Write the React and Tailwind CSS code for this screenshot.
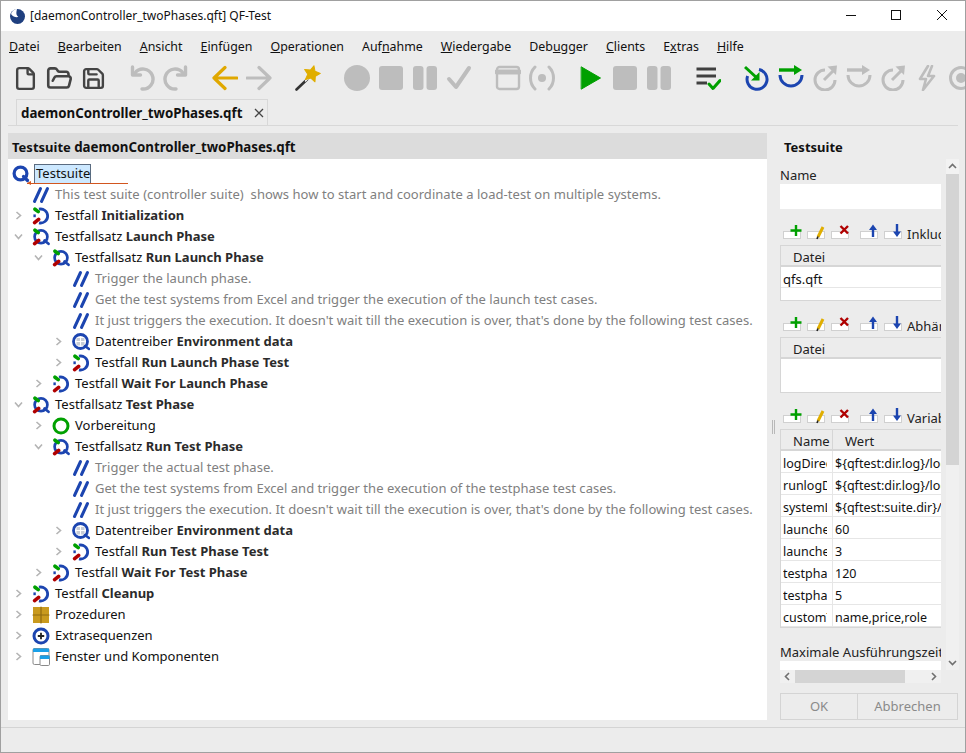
import React from 'react';
import { File, FolderOpen, Save } from 'lucide-react';

const BLUE = '#1c45b0', GREEN = '#00a000', RED = '#b00000', GOLD = '#e0a800', GR = '#bdbdbd', DK = '#444444';

const Svg = ({ children, s = 26 }) => (
  <svg width={s} height={s} viewBox="0 0 26 26" fill="none" strokeLinecap="round" strokeLinejoin="round">{children}</svg>
);
const Btn = ({ children }) => <div className="flex h-[26px] w-[34px] shrink-0 items-center justify-center">{children}</div>;
const Group = ({ children }) => <div className="flex shrink-0 items-center">{children}</div>;

const Undo = () => (
  <Svg>
    <path d="M6 8 A10 10 0 1 1 13 24" stroke={GR} strokeWidth="3.4" />
    <path d="M3.5 2 V10 H11.5" stroke={GR} strokeWidth="3.4" />
  </Svg>
);
const Redo = () => (
  <Svg>
    <path d="M20 8 A10 10 0 1 0 13 24" stroke={GR} strokeWidth="3.4" />
    <path d="M22.5 2 V10 H14.5" stroke={GR} strokeWidth="3.4" />
  </Svg>
);
const Back = ({ c }) => <Svg><path d="M2 13 H25 M13 2.5 L2 13 L13 23.5" stroke={c} strokeWidth="3.2" /></Svg>;
const Fwd = ({ c }) => <Svg><path d="M24 13 H1 M13 2.5 L24 13 L13 23.5" stroke={c} strokeWidth="3.2" /></Svg>;
const Wand = () => (
  <Svg>
    <path d="M1.5 24.5 L12 14.5" stroke="#333" strokeWidth="2.6" />
    <path d="M10.5 16 L13 13.5" stroke="#fff" strokeWidth="1.4" />
    <polygon
      points="17,0.5 19.4,5.6 25.1,6.4 20.9,10.3 21.9,15.9 17,13.2 12.1,15.9 13.1,10.3 8.9,6.4 14.6,5.6"
      fill="#e0ae00" stroke="#e0ae00" strokeWidth="1"
      transform="rotate(14 17 8.5)"
    />
  </Svg>
);
const GCircle = () => <Svg><circle cx="13" cy="13" r="13" fill={GR} /></Svg>;
const GSquare = () => <Svg><rect x="1" y="1" width="24" height="24" rx="3" fill={GR} /></Svg>;
const GPause = () => <Svg><rect x="1" y="1" width="10.5" height="24" rx="3" fill={GR} /><rect x="14.5" y="1" width="10.5" height="24" rx="3" fill={GR} /></Svg>;
const GCheck = () => <Svg><path d="M3 14 L10 22 L23 3" stroke={GR} strokeWidth="4" /></Svg>;
const GWin = () => <Svg><rect x="2" y="2" width="22" height="22" rx="2.5" stroke={GR} strokeWidth="2.4" /><path d="M2 7 H24" stroke={GR} strokeWidth="5" /></Svg>;
const GSignal = () => (
  <Svg>
    <circle cx="13" cy="13" r="4" fill={GR} />
    <path d="M6 2 C0 8 0 18 6 24" stroke={GR} strokeWidth="3" />
    <path d="M20 2 C26 8 26 18 20 24" stroke={GR} strokeWidth="3" />
  </Svg>
);
const Play = () => <Svg><path d="M3.5 2 L22.5 13 L3.5 24 Z" fill={GREEN} stroke={GREEN} strokeWidth="1" /></Svg>;
const ListCheck = () => (
  <Svg>
    <path d="M1.5 4 H21 M1.5 11 H21 M1.5 18 H12" stroke="#404040" strokeWidth="3.2" strokeLinecap="butt" />
    <path d="M14 19 L18 23.5 L25 15.5" stroke={GREEN} strokeWidth="3" />
  </Svg>
);
const StepIn = ({ ring = BLUE, arrow = GREEN }) => (
  <Svg>
    <path d="M15 4.5 A10 10 0 1 1 3.6 11" stroke={ring} strokeWidth="3" strokeLinecap="butt" />
    <path d="M1 2 L13 13" stroke={arrow} strokeWidth="3" strokeLinecap="butt" />
    <path d="M15.5 7 L15.5 15.5 L7 15.5 Z" fill={arrow} />
  </Svg>
);
const StepOver = ({ ring = BLUE, arrow = GREEN }) => (
  <Svg>
    <path d="M2 10 A10.5 10.5 0 1 0 24 10" stroke={ring} strokeWidth="3" strokeLinecap="butt" />
    <path d="M1 5 H17" stroke={arrow} strokeWidth="3.4" strokeLinecap="butt" />
    <path d="M16 0 L24 5 L16 10 Z" fill={arrow} />
  </Svg>
);
const StepOut = () => (
  <Svg>
    <path d="M13 5 A10 10 0 1 0 23 15" stroke={GR} strokeWidth="3" strokeLinecap="butt" />
    <path d="M12 15 L21 6" stroke={GR} strokeWidth="3" strokeLinecap="butt" />
    <path d="M15.5 1.5 L25 0.5 L24 10 Z" fill={GR} />
  </Svg>
);
const Bolt = () => <Svg><path d="M14 1 L6 14 H12 L9 25 L20 11 H14 L18 1" stroke={GR} strokeWidth="2.6" /></Svg>;
const Target = () => <Svg><circle cx="13" cy="13" r="10.5" stroke={GR} strokeWidth="3" /><circle cx="13" cy="13" r="5" fill={GR} /></Svg>;

const Toolbar = () => (
  <div className="flex h-[38px] items-start gap-[15px] overflow-hidden pl-[7px] pt-[3px]">
    <Group>
      <Btn><File size={25} color={DK} strokeWidth={2.3} /></Btn>
      <Btn><FolderOpen size={27} color={DK} strokeWidth={2.3} /></Btn>
      <Btn><Save size={25} color={DK} strokeWidth={2.3} /></Btn>
    </Group>
    <Group><Btn><Undo /></Btn><Btn><Redo /></Btn></Group>
    <Group><Btn><Back c={GOLD} /></Btn><Btn><Fwd c={GR} /></Btn></Group>
    <Group><Btn><Wand /></Btn></Group>
    <Group>
      <Btn><GCircle /></Btn><Btn><GSquare /></Btn><Btn><GPause /></Btn><Btn><GCheck /></Btn>
    </Group>
    <Group><Btn><GWin /></Btn><Btn><GSignal /></Btn></Group>
    <Group><Btn><Play /></Btn><Btn><GSquare /></Btn><Btn><GPause /></Btn></Group>
    <Group><Btn><ListCheck /></Btn></Group>
    <Group>
      <Btn><StepIn /></Btn><Btn><StepOver /></Btn><Btn><StepOut /></Btn>
      <Btn><StepOver ring={GR} arrow={GR} /></Btn><Btn><StepOut /></Btn><Btn><Bolt /></Btn><Btn><Target /></Btn>
    </Group>
  </div>
);

const I = ({ children }) => (
  <svg width="18" height="18" viewBox="0 0 18 18" fill="none" strokeLinecap="round" strokeLinejoin="round">{children}</svg>
);
const Marks = () => (
  <>
    <path d="M3 2.2 L6.2 4.6" stroke={GREEN} strokeWidth="3.6" />
    <path d="M2.6 15.6 L6.6 12.4" stroke={RED} strokeWidth="3.6" />
  </>
);
const icons = {
  suite: () => (
    <I><circle cx="8.5" cy="8.5" r="6.4" stroke={BLUE} strokeWidth="3.2" /><path d="M11.5 11.5 L15.5 15.5" stroke={BLUE} strokeWidth="3.2" /></I>
  ),
  comment: () => (
    <I><path d="M8.5 2.5 L2.5 15.5 M15.5 2.5 L9.5 15.5" stroke={BLUE} strokeWidth="3" /></I>
  ),
  test: () => (
    <I>
      <path d="M7 2.2 A7 7 0 1 1 7 15.8" stroke={BLUE} strokeWidth="2.8" strokeLinecap="butt" />
      <path d="M2.6 7.4 V10.2" stroke={BLUE} strokeWidth="2.4" strokeLinecap="butt" />
      <Marks />
    </I>
  ),
  set: () => (
    <I>
      <circle cx="9" cy="8.8" r="6.4" stroke={BLUE} strokeWidth="2.7" />
      <path d="M12.5 12.5 L16.5 15.8" stroke={BLUE} strokeWidth="2.7" />
      <Marks />
    </I>
  ),
  data: () => (
    <I>
      <circle cx="8.5" cy="8.5" r="7" stroke={BLUE} strokeWidth="2.8" />
      <rect x="4.5" y="5" width="8" height="7.5" fill="#c8cdd6" />
      <path d="M8.5 5 V12.5 M4.5 8.5 H12.5" stroke="#fff" strokeWidth="1" />
      <path d="M13 13 L17 16" stroke={BLUE} strokeWidth="2.6" />
    </I>
  ),
  setup: () => <I><circle cx="9" cy="9" r="7" stroke={GREEN} strokeWidth="3" /></I>,
  proc: () => (
    <I><rect x="1" y="1" width="16" height="16" fill="#c99a1e" /><path d="M9 1 V17 M1 9 H17" stroke="#8f6a10" strokeWidth="1.2" /></I>
  ),
  extra: () => (
    <I><circle cx="9" cy="9" r="7" stroke={BLUE} strokeWidth="3" /><path d="M9 5.8 V12.2 M5.8 9 H12.2" stroke="#222" strokeWidth="1.8" strokeLinecap="butt" /></I>
  ),
  win: () => (
    <I>
      <rect x="1" y="0.5" width="16" height="16" rx="1.5" fill="#fff" stroke="#8a8a8a" strokeWidth="1" />
      <path d="M1 0.5 H17 V4 H1 Z" fill="#1aa0e8" />
      <rect x="8" y="7.5" width="9.5" height="10" rx="1.2" fill="#fff" stroke="#8a8a8a" strokeWidth="1" />
      <path d="M8 7.5 H17.5 V11 H8 Z" fill="#1aa0e8" />
    </I>
  ),
};

const Chev = ({ dir }) => (
  <div className="flex w-[12px] shrink-0 items-center justify-center">
    {dir && (
      <svg width="9" height="9" viewBox="0 0 9 9" fill="none">
        <path d={dir === 'r' ? 'M2.5 1 L6.5 4.5 L2.5 8' : 'M1 2.5 L4.5 6.5 L8 2.5'} stroke="#b4b4b4" strokeWidth="1.6" />
      </svg>
    )}
  </div>
);

const indent = ['pl-[4px]', 'pl-[24px]', 'pl-[44px]'];

const Row = ({ d, c, icon, pre, bold, comment }) => {
  const Ic = icons[icon];
  return (
    <div className={`flex h-[21px] items-center whitespace-nowrap ${indent[d]}`}>
      <Chev dir={c} />
      <div className="ml-[8px] mr-[5px] flex w-[18px] shrink-0 justify-center"><Ic /></div>
      {comment ? (
        <span className="whitespace-pre tracking-[0.035px] text-[#808080]">{pre}</span>
      ) : (
        <span className="text-[#111]">{pre}{bold && <b className="font-bold text-[#2b2b2b]"> {bold}</b>}</span>
      )}
    </div>
  );
};

const rows = [
  { d: 0, icon: 'comment', pre: 'This test suite (controller suite)  shows how to start and coordinate a load-test on multiple systems.', comment: true },
  { d: 0, c: 'r', icon: 'test', pre: 'Testfall', bold: 'Initialization' },
  { d: 0, c: 'd', icon: 'set', pre: 'Testfallsatz', bold: 'Launch Phase' },
  { d: 1, c: 'd', icon: 'set', pre: 'Testfallsatz', bold: 'Run Launch Phase' },
  { d: 2, icon: 'comment', pre: 'Trigger the launch phase.', comment: true },
  { d: 2, icon: 'comment', pre: 'Get the test systems from Excel and trigger the execution of the launch test cases.', comment: true },
  { d: 2, icon: 'comment', pre: "It just triggers the execution. It doesn't wait till the execution is over, that's done by the following test cases.", comment: true },
  { d: 2, c: 'r', icon: 'data', pre: 'Datentreiber', bold: 'Environment data' },
  { d: 2, c: 'r', icon: 'test', pre: 'Testfall', bold: 'Run Launch Phase Test' },
  { d: 1, c: 'r', icon: 'test', pre: 'Testfall', bold: 'Wait For Launch Phase' },
  { d: 0, c: 'd', icon: 'set', pre: 'Testfallsatz', bold: 'Test Phase' },
  { d: 1, c: 'r', icon: 'setup', pre: 'Vorbereitung' },
  { d: 1, c: 'd', icon: 'set', pre: 'Testfallsatz', bold: 'Run Test Phase' },
  { d: 2, icon: 'comment', pre: 'Trigger the actual test phase.', comment: true },
  { d: 2, icon: 'comment', pre: 'Get the test systems from Excel and trigger the execution of the testphase test cases.', comment: true },
  { d: 2, icon: 'comment', pre: "It just triggers the execution. It doesn't wait till the execution is over, that's done by the following test cases.", comment: true },
  { d: 2, c: 'r', icon: 'data', pre: 'Datentreiber', bold: 'Environment data' },
  { d: 2, c: 'r', icon: 'test', pre: 'Testfall', bold: 'Run Test Phase Test' },
  { d: 1, c: 'r', icon: 'test', pre: 'Testfall', bold: 'Wait For Test Phase' },
  { d: 0, c: 'r', icon: 'test', pre: 'Testfall', bold: 'Cleanup' },
  { d: 0, c: 'r', icon: 'proc', pre: 'Prozeduren' },
  { d: 0, c: 'r', icon: 'extra', pre: 'Extrasequenzen' },
  { d: 0, c: 'r', icon: 'win', pre: 'Fenster und Komponenten' },
];

const Mn = ({ a, u, b }) => <span>{a}<span className="underline">{u}</span>{b}</span>;

const Box = ({ children }) => (
  <svg width="20" height="18" viewBox="0 0 20 18" fill="none">
    <rect x="0.5" y="7.5" width="17" height="7" fill="#fff" stroke="#d0d0d0" strokeWidth="1" />
    {children}
  </svg>
);
const MiniBar = ({ label }) => (
  <div className="flex h-[18px] items-center whitespace-nowrap pl-[3px]">
    <div className="flex gap-[4px]">
      <Box><path d="M13 1 V12 M7.5 6.5 H18.5" stroke={GREEN} strokeWidth="2.4" /></Box>
      <Box><path d="M11 13 L16 3" stroke="#e0ae00" strokeWidth="3" /><path d="M10 15 L11 12.5" stroke="#222" strokeWidth="1.6" /></Box>
      <Box><path d="M9.5 2 L17 9.5 M17 2 L9.5 9.5" stroke={RED} strokeWidth="2.4" /></Box>
      <div className="w-[1px]" />
      <Box><path d="M13 13 V4" stroke={BLUE} strokeWidth="2.4" /><path d="M9 6 L13 0.5 L17 6 Z" fill={BLUE} /></Box>
      <Box><path d="M13 0 V8" stroke={BLUE} strokeWidth="2.4" /><path d="M9 7.5 L13 13 L17 7.5 Z" fill={BLUE} /></Box>
    </div>
    <span className="ml-[3px] pt-[4px] text-[#222]">{label}</span>
  </div>
);

const FileTable = ({ body }) => (
  <div className="w-[200px] border border-[#d6d6d6]">
    <div className="h-[21px] border-b-2 border-[#d6d6d6] pl-[12px] leading-[22px] text-[#222]">Datei</div>
    {body}
  </div>
);

const vars = [
  ['logDirectory', '${qftest:dir.log}/logs/x'],
  ['runlogDir', '${qftest:dir.log}/logs/y'],
  ['systemList', '${qftest:suite.dir}/systems'],
  ['launcherA', '60'],
  ['launcherB', '3'],
  ['testphaseA', '120'],
  ['testphaseB', '5'],
  ['customTypes', 'name,price,role'],
];

const SArrow = ({ d }) => (
  <svg width="9" height="9" viewBox="0 0 9 9" fill="none"><path d={d} stroke="#707070" strokeWidth="1.6" /></svg>
);

const RightPanel = () => (
  <div className="flex h-full w-[179px] shrink-0 flex-col">
    <div className="flex h-[26px] items-center pl-[4px] pt-[4px] font-bold text-[#111]">Testsuite</div>
    <div className="flex h-[524px]">
      <div className="w-[161px] overflow-hidden">
        <div className="h-[511px] overflow-hidden">
          <div className="h-[25px] pt-[7px] leading-[18px] text-[#222]">Name</div>
          <div className="h-[25px] bg-white" />
          <div className="h-[15px]" />
          <MiniBar label="Inkludierte Dateien" />
          <div className="h-[3px]" />
          <FileTable body={<><div className="h-[21px] border-b border-[#e6e6e6] bg-white pl-[2px] leading-[25px] text-[#111]">qfs.qft</div><div className="h-[12px] bg-white" /></>} />
          <div className="h-[15px]" />
          <MiniBar label="Abhängigkeiten" />
          <div className="h-[3px]" />
          <FileTable body={<div className="h-[33px] bg-white" />} />
          <div className="h-[15px]" />
          <MiniBar label="Variablen" />
          <div className="h-[3px]" />
          <div className="w-[220px] border border-[#d6d6d6]">
            <div className="flex h-[21px] border-b-2 border-[#d6d6d6] leading-[23px] text-[#222]">
              <div className="w-[52px] shrink-0 border-r border-[#d6d6d6] pl-[12px]">Name</div>
              <div className="pl-[12px]">Wert</div>
            </div>
            {vars.map(([n, v]) => (
              <div key={n} className="flex h-[22px] border-b border-[#e6e6e6] bg-white text-[12.5px] leading-[26px] text-[#111]">
                <div className="w-[52px] shrink-0 border-r border-[#e6e6e6] pl-[2px] pr-[5px]">
                  <div className="overflow-hidden whitespace-nowrap">{n}</div>
                </div>
                <div className="whitespace-nowrap pl-[2px]">{v}</div>
              </div>
            ))}
          </div>
          <div className="h-[15px]" />
          <div className="h-[18px] whitespace-nowrap leading-[18px] text-[#222]">Maximale Ausführungszeit</div>
          <div className="h-[30px] bg-white" />
        </div>
        <div className="flex h-[13px] items-center bg-[#f0f0f0]">
          <div className="flex w-[15px] justify-center"><SArrow d="M6 1 L2.5 4.5 L6 8" /></div>
          <div className="h-full w-[110px] bg-[#d4d4d4]" />
          <div className="grow" />
          <div className="flex w-[15px] justify-center"><SArrow d="M3 1 L6.5 4.5 L3 8" /></div>
        </div>
      </div>
      <div className="w-[5px]" />
      <div className="flex h-[511px] w-[13px] flex-col bg-[#f0f0f0]">
        <div className="flex h-[15px] items-center justify-center bg-[#f2f2f2]"><SArrow d="M1 6 L4.5 2.5 L8 6" /></div>
        <div className="h-[291px] bg-[#d4d4d4]" />
        <div className="grow" />
        <div className="flex h-[15px] items-center justify-center"><SArrow d="M1 3 L4.5 6.5 L8 3" /></div>
      </div>
    </div>
    <div className="grow" />
    <div className="flex h-[27px] text-[#8a8a8a]">
      <div className="flex w-[78px] items-center justify-center border border-[#d4d4d4] pt-[1px]">OK</div>
      <div className="flex w-[100px] items-center justify-center border border-l-0 border-[#d4d4d4] pt-[1px]">Abbrechen</div>
    </div>
  </div>
);

export default function App() {
  return (
    <div
      className="flex h-[753px] w-[966px] flex-col overflow-hidden border border-[#a0a0a0] bg-[#ececec] text-[13px]"
      style={{ fontFamily: '"Noto Sans", "Open Sans", sans-serif' }}
    >
      <div className="flex h-[30px] shrink-0 items-center bg-white">
        <svg className="ml-[8px]" width="17" height="17" viewBox="0 0 17 17">
          <circle cx="8.5" cy="8.5" r="7.5" fill="#1f3f7f" />
          <path d="M8 1 C7 5 7 7 9.5 9 C7 9.5 4 9 2 6 C3 3 5 1 8 1 Z" fill="#fff" />
          <path d="M9.5 2 H11.5 V9 H9.5 Z" fill="#1f3f7f" />
        </svg>
        <span className="ml-[4px] text-[12px] text-[#111]">[daemonController_twoPhases.qft] QF-Test</span>
        <div className="grow" />
        <svg className="mb-[2px] mr-[33px]" width="12" height="12" viewBox="0 0 12 12"><path d="M1 6.5 H11" stroke="#111" strokeWidth="1" /></svg>
        <svg className="mb-[2px] mr-[34px]" width="12" height="12" viewBox="0 0 12 12"><rect x="1.5" y="1.5" width="9" height="9" fill="none" stroke="#111" strokeWidth="1" /></svg>
        <svg className="mb-[2px] mr-[17px]" width="12" height="12" viewBox="0 0 12 12"><path d="M1 1 L11 11 M11 1 L1 11" stroke="#111" strokeWidth="1" /></svg>
      </div>

      <div className="flex h-[31px] shrink-0 items-center gap-[18px] pl-[8px] pt-[1px] text-[12.4px] text-[#111]">
        <Mn u="D" b="atei" />
        <Mn u="B" b="earbeiten" />
        <Mn u="A" b="nsicht" />
        <Mn u="E" b="infügen" />
        <Mn u="O" b="perationen" />
        <Mn a="Auf" u="n" b="ahme" />
        <Mn u="W" b="iedergabe" />
        <Mn a="Deb" u="u" b="gger" />
        <Mn u="C" b="lients" />
        <Mn a="E" u="x" b="tras" />
        <Mn u="H" b="ilfe" />
      </div>

      <Toolbar />

      <div className="mx-[7px] mr-[7px] flex h-[26px] shrink-0 items-end border-b border-[#d8d8d8] pl-[8px]">
        <div className="flex h-[26px] w-[252px] items-center border-x border-t border-[#d8d8d8] pl-[4px] pt-[2px]">
          <span className="text-[13.3px] font-bold text-[#111]">daemonController_twoPhases.qft</span>
          <div className="grow" />
          <svg className="mb-[2px] mr-[3px]" width="10" height="10" viewBox="0 0 10 10"><path d="M1 1 L9 9 M9 1 L1 9" stroke="#444" strokeWidth="1.3" /></svg>
        </div>
      </div>

      <div className="h-[7px] shrink-0" />

      <div className="flex h-[587px] shrink-0 pl-[7px]">
        <div className="flex w-[759px] shrink-0 flex-col">
          <div className="flex h-[26px] shrink-0 items-center whitespace-pre bg-[#dcdcdc] pl-[4px] pt-[4px] font-bold text-[#111]">
            Testsuite <span className="text-[13.3px]">daemonController_twoPhases.qft</span>
          </div>
          <div className="grow bg-white pt-[4px]">
            <div className="relative flex h-[21px] items-center pl-[4px]">
              <icons.suite />
              <span className="ml-[4px] flex h-[20px] w-[57px] items-center border border-[#5a6b80] bg-[#cce8ff] pl-[1px] text-[#111]">Testsuite</span>
              <div className="absolute left-[19px] top-[20px] h-px w-[101px] bg-[#d2561f]" />
              <div className="absolute left-[19px] top-[18px] h-0 w-0 border-y-[2.5px] border-r-[4px] border-y-transparent border-r-[#d2561f]" />
            </div>
            {rows.map((r, i) => <Row key={i} {...r} />)}
          </div>
        </div>

        <div className="flex w-[13px] shrink-0 items-start pl-[5px] pt-[287px]">
          <div className="h-[14px] w-[3px] border-x border-[#b8b8b8]" />
        </div>

        <RightPanel />
      </div>

      <div className="grow" />
      <div className="h-[25px] shrink-0 border-t border-[#d4d4d4]" />
    </div>
  );
}
